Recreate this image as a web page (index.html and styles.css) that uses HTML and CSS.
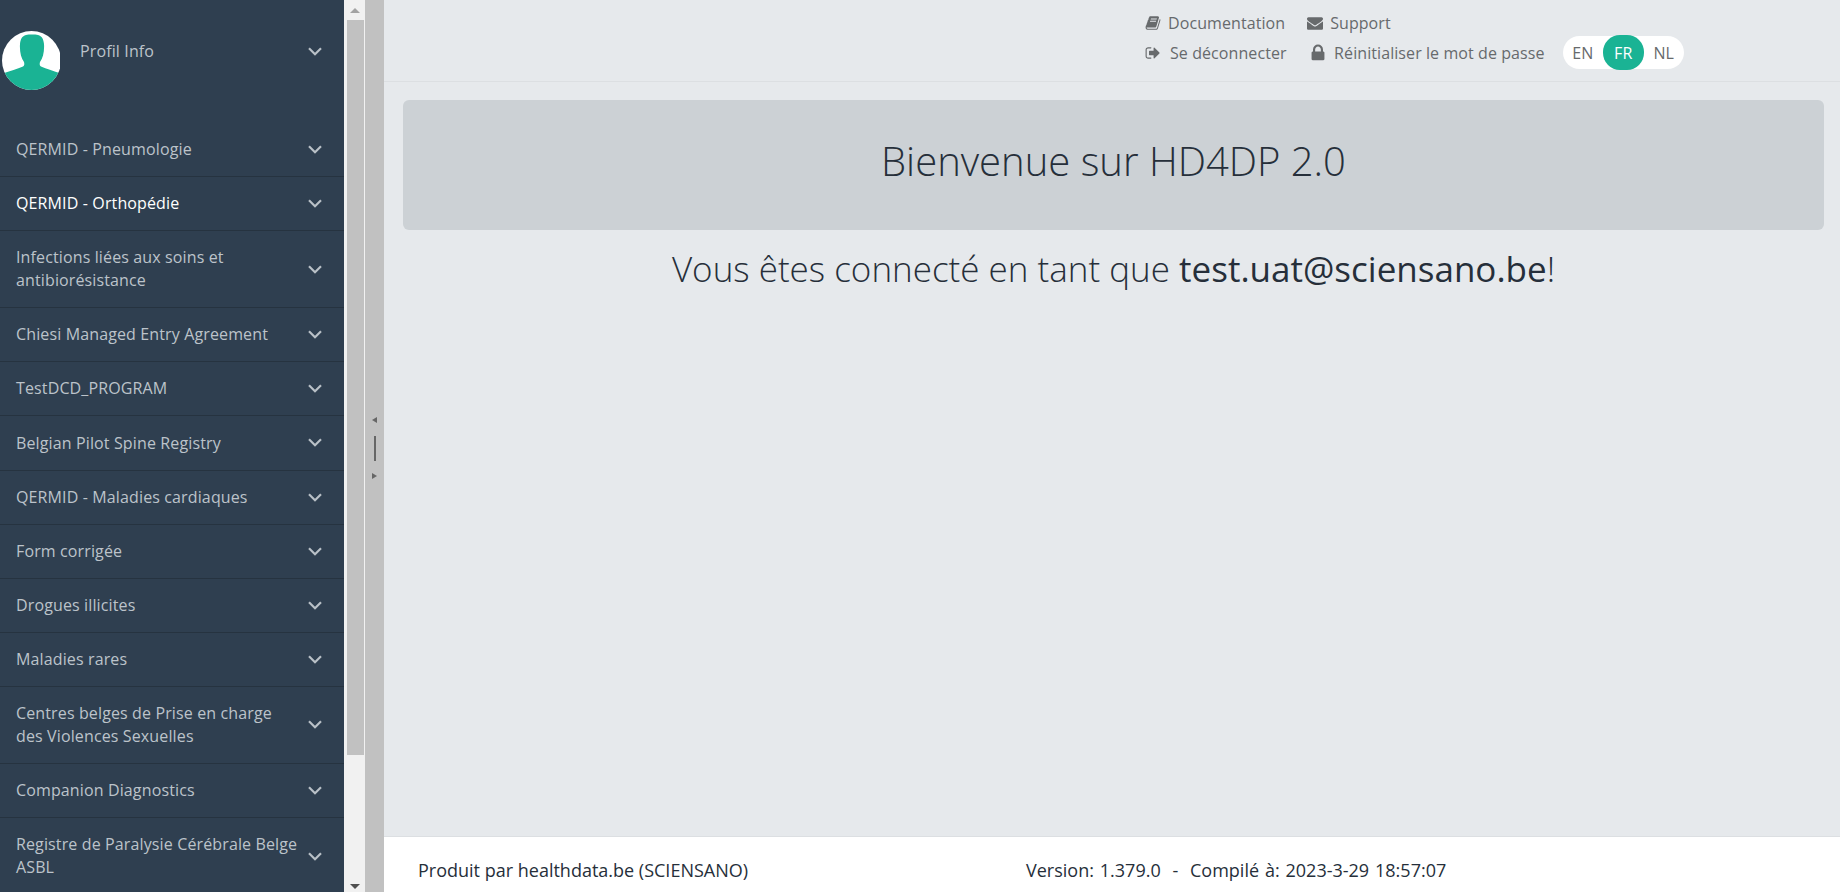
FILE: index.html
```html
<!DOCTYPE html>
<html lang="fr">
<head>
<meta charset="utf-8">
<title>HD4DP 2.0</title>
<link rel="stylesheet" href="styles.css">
</head>
<body>
<svg class="sprite" width="0" height="0" aria-hidden="true">
  <symbol id="chev" viewBox="0 0 14 9"><path d="M1 1.2 7 7.2 13 1.2" fill="none" stroke="currentColor" stroke-width="2.2"/></symbol>
  <symbol id="book" viewBox="0 0 1792 1792"><path fill="currentColor" d="M1703 478q40 57 18 129l-275 906q-19 64-76.500 107.500t-122.500 43.500h-923q-77 0-148.500-53.500t-99.500-131.500q-24-67-2-127 0-4 3-27t4-37q1-8-3-21.500t-3-19.500q2-11 8-21t16.500-23.500 16.500-23.500q23-38 45-91.500t30-91.500q3-10 .5-30t-.5-28q3-11 17-28t17-23q21-36 42-92t25-90q1-9-2.500-32t.5-28q4-13 22-30.500t22-22.500q19-26 42.500-84.500t27.500-96.500q1-8-3-25.500t-2-26.500q2-8 9-18t18-23 17-21q8-12 16.500-30.500t15-35 16-36 19.500-32 26.500-23.500 36-11.500 47.500 5.500l-1 3q38-9 51-9h761q74 0 114 56t18 130l-274 906q-36 119-71.500 153.500t-128.500 34.500h-869q-27 0-38 15-11 16-1 43 24 70 144 70h923q29 0 56-15.500t35-41.500l300-987q7-22 5-57 38 15 59 43zm-1064 2q-4 13 2 22.500t20 9.500h608q13 0 25.500-9.500t16.500-22.500l21-64q4-13-2-22.500t-20-9.500h-608q-13 0-25.500 9.500t-16.500 22.500zm-83 256q-4 13 2 22.500t20 9.500h608q13 0 25.500-9.500t16.500-22.500l21-64q4-13-2-22.500t-20-9.500h-608q-13 0-25.500 9.500t-16.500 22.500z"/></symbol>
  <symbol id="mail" viewBox="0 0 1792 1792"><path fill="currentColor" d="M1792 710v794q0 66-47 113t-113 47h-1472q-66 0-113-47t-47-113v-794q44 49 101 87 362 246 497 345 57 42 92.500 65.500t94.500 48 110 24.500h2q51 0 110-24.500t94.500-48 92.500-65.500q170-123 498-345 57-39 100-87zm0-294q0 79-49 151t-122 123q-376 261-468 325-10 7-42.500 30.500t-54 38-52 32.500-57.500 27-50 9h-2q-23 0-50-9t-57.500-27-52-32.500-54-38-42.500-30.500q-91-64-262-182.500t-205-142.500q-62-42-117-115.500t-55-136.500q0-78 41.500-130t118.500-52h1472q65 0 112.500 47t47.500 113z"/></symbol>
  <symbol id="out" viewBox="0 0 1792 1792"><path fill="currentColor" d="M704 1440q0 4 1 20t.5 26.500-3 23.500-10 19.500-20.500 6.500h-320q-119 0-203.500-84.500t-84.500-203.500v-704q0-119 84.500-203.500t203.500-84.500h320q13 0 22.500 9.500t9.500 22.500q0 4 1 20t.5 26.500-3 23.500-10 19.500-20.500 6.500h-320q-66 0-113 47t-47 113v704q0 66 47 113t113 47h312l11.500 1 11.500 3 8 5.500 7 9 2 13.500zm928-544q0 26-19 45l-544 544q-19 19-45 19t-45-19-19-45v-288h-448q-26 0-45-19t-19-45v-384q0-26 19-45t45-19h448v-288q0-26 19-45t45-19 45 19l544 544q19 19 19 45z"/></symbol>
  <symbol id="lock" viewBox="0 0 1792 1792"><path fill="currentColor" d="M640 768h512v-192q0-106-75-181t-181-75-181 75-75 181v192zm832 96v576q0 40-28 68t-68 28h-960q-40 0-68-28t-28-68v-576q0-40 28-68t68-28h32v-192q0-184 132-316t316-132 316 132 132 316v192h32q40 0 68 28t28 68z"/></symbol>
</svg>

<div class="app">
  <aside class="sidebar">
    <div class="profile">
      <svg class="avatar" viewBox="0 0 58 59" aria-hidden="true">
        <defs><clipPath id="av"><circle cx="29.500" cy="29.500" r="29.500"/></clipPath></defs>
        <g clip-path="url(#av)">
          <rect x="0" y="0" width="60" height="59" fill="#fff"/>
          <path fill="#1ab394" d="M24 4C27 3.400 33 3.400 36 4 40 5 41.500 8 42 13 42.500 20 41 27 38 31 37.500 33 37.500 34.500 39 35.500 45 38 52 40 60 43V60H-1V43C8 40 15 38 21 35.500 22.500 34.500 22.500 33 22 31 19 27 17.500 20 18 13 18.500 8 20 5 24 4Z"/>
        </g>
      </svg>
      <span class="profile-name">Profil Info</span>
      <svg class="chev"><use href="#chev"/></svg>
    </div>
    <nav class="menu">
      <a class="row"><span>QERMID - Pneumologie</span><svg class="chev"><use href="#chev"/></svg></a>
      <a class="row active"><span>QERMID - Orthopédie</span><svg class="chev"><use href="#chev"/></svg></a>
      <a class="row"><span>Infections liées aux soins et antibiorésistance</span><svg class="chev"><use href="#chev"/></svg></a>
      <a class="row"><span>Chiesi Managed Entry Agreement</span><svg class="chev"><use href="#chev"/></svg></a>
      <a class="row"><span>TestDCD_PROGRAM</span><svg class="chev"><use href="#chev"/></svg></a>
      <a class="row"><span>Belgian Pilot Spine Registry</span><svg class="chev"><use href="#chev"/></svg></a>
      <a class="row"><span>QERMID - Maladies cardiaques</span><svg class="chev"><use href="#chev"/></svg></a>
      <a class="row"><span>Form corrigée</span><svg class="chev"><use href="#chev"/></svg></a>
      <a class="row"><span>Drogues illicites</span><svg class="chev"><use href="#chev"/></svg></a>
      <a class="row"><span>Maladies rares</span><svg class="chev"><use href="#chev"/></svg></a>
      <a class="row"><span>Centres belges de Prise en charge des Violences Sexuelles</span><svg class="chev"><use href="#chev"/></svg></a>
      <a class="row"><span>Companion Diagnostics</span><svg class="chev"><use href="#chev"/></svg></a>
      <a class="row"><span>Registre de Paralysie Cérébrale Belge ASBL</span><svg class="chev"><use href="#chev"/></svg></a>
    </nav>
  </aside>

  <div class="scrollbar">
    <i class="arrow up"></i>
    <div class="thumb"></div>
    <div class="rest"></div>
    <i class="arrow down"></i>
  </div>

  <div class="gutter">
    <i class="tri left"></i>
    <i class="grip"></i>
    <i class="tri right"></i>
  </div>

  <main class="main">
    <header class="topbar">
      <div class="links">
        <div class="links-row">
          <a class="link link-doc"><svg class="ico"><use href="#book"/></svg>Documentation</a>
          <a class="link"><svg class="ico"><use href="#mail"/></svg>Support</a>
        </div>
        <div class="links-row">
          <a class="link link-out"><svg class="ico"><use href="#out"/></svg>Se déconnecter</a>
          <a class="link link-lock"><svg class="ico"><use href="#lock"/></svg>Réinitialiser le mot de passe</a>
          <div class="langs">
            <span class="lang">EN</span>
            <span class="lang on">FR</span>
            <span class="lang">NL</span>
          </div>
        </div>
      </div>
    </header>
    <section class="content">
      <div class="jumbo"><h1>Bienvenue sur HD4DP 2.0</h1></div>
      <h2>Vous êtes connecté en tant que <b>test.uat@sciensano.be</b>!</h2>
    </section>
    <footer class="footer">
      <span class="credit">Produit par healthdata.be (SCIENSANO)</span>
      <span class="version">Version: 1.379.0 &nbsp;-&nbsp; Compilé à: 2023-3-29 18:57:07</span>
    </footer>
  </main>
</div>
</body>
</html>
```
FILE: styles.css
```css
* { box-sizing: border-box; }
html, body { margin: 0; height: 100%; overflow: hidden; }
body { font-family: "Open Sans", sans-serif; font-size: 16px; color: #262f3a; background: #e6e9ec; }
.sprite { position: absolute; }
.app { display: flex; height: 892px; }

.sidebar { width: 344px; flex: none; background: #2f3f50; color: #bcc3ca; overflow: hidden; letter-spacing: .13px; }
.profile { height: 123px; display: flex; align-items: flex-start; padding: 31px 22px 0 2px; }
.avatar { width: 58px; height: 59px; flex: none; }
.profile-name { flex: 1; margin: 8px 0 0 20px; line-height: 24px; }
.profile .chev { margin-top: 16px; }
.chev { width: 14px; height: 9px; flex: none; color: #b9c0c7; }
.row { display: flex; align-items: center; justify-content: space-between; padding: 15.130px 22px 15.130px 16px; border-bottom: 1px solid #263340; line-height: 22.857px; }
.row span { display: block; max-width: 284px; }
.row.active { color: #fff; }

.scrollbar { width: 21px; flex: none; background: #f1f1f1; display: flex; flex-direction: column; align-items: center; border-left: 1px solid #f1f1f1; }
.arrow { flex: none; width: 0; height: 0; border-left: 5px solid transparent; border-right: 5px solid transparent; }
.arrow.up { border-bottom: 5px solid #a3a3a3; margin: 8px 0 7px; }
.arrow.down { border-top: 5px solid #505050; margin: 5px 0 3px; }
.thumb { width: 17px; height: 735px; background: #c1c1c1; flex: none; }
.rest { flex: 1; }

.gutter { width: 19px; flex: none; background: #c1c1c1; display: flex; flex-direction: column; align-items: center; justify-content: center; padding-top: 4px; }
.tri { width: 0; height: 0; border-top: 3.500px solid transparent; border-bottom: 3.500px solid transparent; }
.tri.left { border-right: 5px solid #666; }
.tri.right { border-left: 5px solid #666; }
.grip { width: 2px; height: 25px; background: #666; margin: 13px 0 12px; }

.main { flex: 1; min-width: 0; display: flex; flex-direction: column; }
.topbar { height: 82px; border-bottom: 1px solid #dcdfe2; padding: 11px 0 0 761px; flex: none; }
.links-row { display: flex; align-items: center; color: #676a6c; letter-spacing: .08px; }
.links-row:first-child { height: 24px; }
.links-row + .links-row { height: 35px; }
.link { display: flex; align-items: center; white-space: nowrap; }
.ico { width: 16px; height: 16px; flex: none; margin-right: 7px; }
.link-doc { margin-right: 22px; }
.link-out .ico { margin-right: 9px; }
.link-out { margin-right: 21px; }
.link-lock .ico { width: 20px; height: 20px; margin-right: 6.500px; }
.langs { display: flex; margin-left: 18px; background: #fff; border-radius: 17px; height: 33px; align-items: center; }
.lang { width: 40.500px; height: 33px; display: flex; align-items: center; justify-content: center; border-radius: 17px; }
.lang.on { background: #1ab394; color: #fff; height: 35px; }

.content { flex: 1; padding: 18px 16px 0 19px; text-align: center; }
.jumbo { height: 130px; background: #ccd1d5; border-radius: 6px; display: flex; align-items: center; justify-content: center; padding-bottom: 10px; }
h1 { margin: 0; font-weight: 300; font-size: 40px; color: #262f3a; }
h2 { margin: 14px 0 0; font-weight: 300; font-size: 35px; line-height: 50px; color: #262f3a; }
h2 b { font-weight: 400; }

.footer { height: 56px; flex: none; background: #fff; border-top: 1px solid #dcdfe2; display: flex; align-items: center; padding: 10px 0 0 34px; font-size: 18px; color: #262f3a; }
.credit { width: 608px; flex: none; }
.version { word-spacing: 1.200px; }
```
